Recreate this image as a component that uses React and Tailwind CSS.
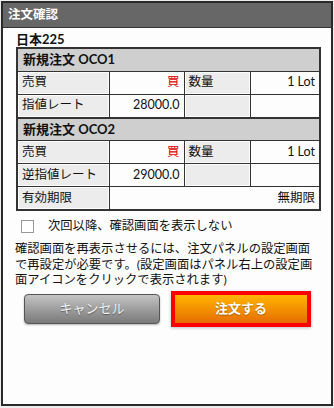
const font = { fontFamily: "Lato, 'Noto Sans CJK JP', sans-serif" }

const Label = ({ children, className = "" }) => (
  <td className={`border border-[#333] p-0 ${className}`}>
    <div className="m-px h-[20px] bg-[#ececec] px-[3px] flex items-center">{children}</div>
  </td>
)

const Value = ({ children, className = "" }) => (
  <td className={`border border-[#333] px-[4px] text-right ${className}`}>{children}</td>
)

const Header = ({ children }) => (
  <tr className="h-[23px]">
    <td colSpan={4} className="border border-[#333] bg-[#cfcfcf] px-[5px] font-bold text-[13px]">
      {children}
    </td>
  </tr>
)

export default function App() {
  return (
    <div className="w-[334px] h-[408px] bg-[#ededed] p-px" style={font}>
      <div className="h-[405px] border-2 border-[#2a2a2a] bg-[#fdfdfd] flex flex-col text-[#111]">
        <div className="h-[25px] bg-[#676767] border-b border-[#333] flex items-center px-[5px]">
          <span className="text-white font-bold text-[12.5px]">注文確認</span>
        </div>

        <div className="pl-[13px] pr-[12px] pt-[3px]">
          <div className="font-bold text-[13px] leading-[16px]">日本225</div>
          <table className="w-[303px] border-collapse border-2 border-[#333] text-[12.5px] table-fixed">
            <colgroup>
              <col className="w-[92px]" />
              <col className="w-[75px]" />
              <col className="w-[66px]" />
              <col className="w-[70px]" />
            </colgroup>
            <tbody>
              <Header>新規注文 OCO1</Header>
              <tr className="h-[22px]">
                <Label>売買</Label>
                <Value className="text-[#e00000]">買</Value>
                <Label>数量</Label>
                <Value>1 Lot</Value>
              </tr>
              <tr className="h-[22px] border-b-2 border-[#333]">
                <Label>指値レート</Label>
                <Value>28000.0</Value>
                <Label></Label>
                <Value></Value>
              </tr>
              <Header>新規注文 OCO2</Header>
              <tr className="h-[22px]">
                <Label>売買</Label>
                <Value className="text-[#e00000]">買</Value>
                <Label>数量</Label>
                <Value>1 Lot</Value>
              </tr>
              <tr className="h-[22px]">
                <Label>逆指値レート</Label>
                <Value>29000.0</Value>
                <Label></Label>
                <Value></Value>
              </tr>
              <tr className="h-[22px]">
                <Label>有効期限</Label>
                <td colSpan={3} className="border border-[#333] px-[4px] text-right">無期限</td>
              </tr>
            </tbody>
          </table>

          <label className="flex items-center mt-[6px] ml-[5px] text-[12.3px]">
            <span className="w-[13px] h-[13px] border border-[#999] bg-white shrink-0" />
            <span className="ml-[14px]">次回以降、確認画面を表示しない</span>
          </label>

          <p className="mt-[6px] w-[302px] text-[12.3px] leading-[15.5px] -ml-[1px]">
            確認画面を再表示させるには、注文パネルの設定画面で再設定が必要です。(設定画面はパネル右上の設定画面アイコンをクリックで表示されます)
          </p>

          <div className="flex items-center mt-[3px] ml-[8px] gap-[11px]">
            <button className="w-[136px] h-[30px] rounded-[4px] border border-[#555] bg-gradient-to-b from-[#c4c4c4] to-[#7a7a7a] text-[#f2f2f2] text-[13px] shadow-[0_1px_2px_rgba(0,0,0,0.3)] [text-shadow:0_1px_1px_rgba(0,0,0,0.4)]">
              キャンセル
            </button>
            <div className="w-[140px] h-[36px] border-4 border-[#ff0000] shadow-[0_1px_3px_rgba(0,0,0,0.25)]">
              <button className="w-full h-full bg-gradient-to-b from-[#ffb400] to-[#e66d00] text-white font-bold text-[13px] [text-shadow:0_1px_1px_rgba(0,0,0,0.3)]">
                注文する
              </button>
            </div>
          </div>
        </div>
      </div>
    </div>
  )
}
